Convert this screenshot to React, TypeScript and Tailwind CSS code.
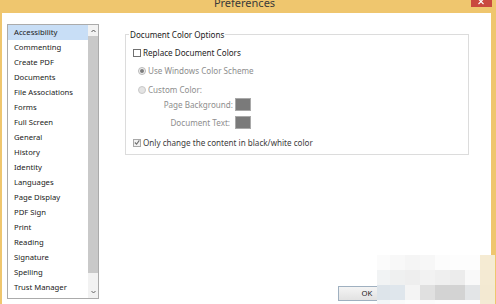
import React from "react";

const items = [
  "Accessibility",
  "Commenting",
  "Create PDF",
  "Documents",
  "File Associations",
  "Forms",
  "Full Screen",
  "General",
  "History",
  "Identity",
  "Languages",
  "Page Display",
  "PDF Sign",
  "Print",
  "Reading",
  "Signature",
  "Spelling",
  "Trust Manager",
];

const mosaic: string[][] = [
  ["#fbfbfb", "#f8f8f8", "#f5f5f5", "#f7f7f7", "#fcfcfc", "#fdfdfd", "#fdfdfd", "#f5ebd3"],
  ["#f1f3f4", "#eff0f0", "#eeeeee", "#f2f2f2", "#efefef", "#ececec", "#f9f9f9", "#f4ead3"],
  ["#dde4ea", "#dfe6ec", "#f4f4f4", "#e0e0e0", "#d3d3d3", "#d3d3d3", "#e3e5e7", "#f3e9d2"],
  ["#f3f6f8", "#fafafa", "#fdfdfd", "#fbfbfb", "#fdfdfd", "#fdfdfd", "#fdfdfd", "#f4ebd5"],
];

function Checkbox({ checked }: { checked?: boolean }) {
  if (checked) {
    return (
      <div className="w-[8px] h-[8px] border border-[#a8a8a8] bg-[#f2f2f2] flex items-center justify-center shrink-0">
        <svg width="7" height="7" viewBox="0 0 7 7">
          <path d="M1 3.5 L3 5.5 L6.2 1" fill="none" stroke="#707070" strokeWidth="1.3" />
        </svg>
      </div>
    );
  }
  return <div className="w-[8px] h-[8px] border border-[#707070] bg-white shrink-0" />;
}

function Radio({ checked }: { checked?: boolean }) {
  return (
    <div
      className={
        checked
          ? "w-[8px] h-[8px] rounded-full border border-[#b8b8b8] bg-[#f2f2f2] flex items-center justify-center shrink-0"
          : "w-[8px] h-[8px] rounded-full border border-[#c8c8c8] bg-[#e4e4e4] shrink-0"
      }
    >
      {checked && <div className="w-[4px] h-[4px] rounded-full bg-[#7c7c7c]" />}
    </div>
  );
}

export default function App() {
  return (
    <div className="w-[496px] h-[304px] bg-[#efc66e] flex flex-col overflow-hidden relative font-['Noto_Sans',sans-serif] text-[7.7px] leading-[11px] text-[#222]">
      {/* title bar */}
      <div className="h-[13px] shrink-0 relative flex justify-center">
        <div className="text-[11px] leading-[11px] text-[#3a3a3a] -mt-[3px] -ml-[7px]">Preferences</div>
        <div className="absolute right-[4px] top-0 w-[21px] h-[7px] bg-[#c9493f] flex justify-center">
          <svg width="7" height="5" viewBox="0 0 7 5">
            <path d="M0.5 -1 L5.5 4 M5.5 -1 L0.5 4" stroke="#ffffff" strokeWidth="1.1" />
          </svg>
        </div>
      </div>

      {/* body */}
      <div className="flex-1 ml-[2px] mr-[5px] bg-white flex pt-[11px] pl-[5px]">
        {/* list box */}
        <div className="w-[92px] h-[275px] border border-[#ababab] flex shrink-0">
          <div className="w-[80px] flex flex-col">
            {items.map((it, i) => (
              <div
                key={it}
                className={
                  i === 0
                    ? "h-[15px] pl-[6px] flex items-center bg-[#c8def6] text-[#1a1a1a]"
                    : "h-[15px] pl-[6px] flex items-center text-[#1a1a1a]"
                }
              >
                {it}
              </div>
            ))}
          </div>
          <div className="w-[10px] flex flex-col bg-[#f2f2f2]">
            <div className="h-[11px] flex items-center justify-center">
              <svg width="5" height="4" viewBox="0 0 5 4">
                <path d="M0.5 3 L2.5 1 L4.5 3" fill="none" stroke="#555" strokeWidth="1" />
              </svg>
            </div>
            <div className="h-[237px] bg-[#c9c9c9]" />
            <div className="flex-1" />
            <div className="h-[12px] flex items-center justify-center">
              <svg width="5" height="4" viewBox="0 0 5 4">
                <path d="M0.5 1 L2.5 3 L4.5 1" fill="none" stroke="#666" strokeWidth="1" />
              </svg>
            </div>
          </div>
        </div>

        {/* right column */}
        <div className="ml-[26px] w-[344px] flex flex-col text-[8.1px]">
          <div className="mt-[10px] h-[121px] border border-[#dcdcdc] relative flex flex-col pt-[11px]">
            <div className="absolute left-[3px] -top-[6px] px-[1px] bg-white text-[#222]">
              Document Color Options
            </div>
            <div className="h-[13px] flex items-center pl-[7px] gap-[2px]">
              <Checkbox />
              <span className="text-[#1e1e1e]">Replace Document Colors</span>
            </div>
            <div className="h-[13px] mt-[5px] flex items-center pl-[12px] gap-[2px] text-[#8e8e8e]">
              <Radio checked />
              <span>Use Windows Color Scheme</span>
            </div>
            <div className="h-[13px] mt-[6px] flex items-center pl-[12px] gap-[2px] text-[#8e8e8e]">
              <Radio />
              <span>Custom Color:</span>
            </div>
            <div className="h-[13px] mt-[2px] flex items-center text-[#8e8e8e]">
              <div className="w-[107px] text-right">Page Background:</div>
              <div className="ml-[2px] w-[16px] h-[13px] bg-[#7a7a7a] border border-[#a9a9a9]" />
            </div>
            <div className="h-[13px] mt-[5px] flex items-center text-[#8e8e8e]">
              <div className="w-[104px] text-right">Document Text:</div>
              <div className="ml-[5px] w-[16px] h-[13px] bg-[#7a7a7a] border border-[#a9a9a9]" />
            </div>
            <div className="h-[13px] mt-[7px] flex items-center pl-[7px] gap-[2px]">
              <Checkbox checked />
              <span className="text-[#3c3c3c]">Only change the content in black/white color</span>
            </div>
          </div>

          <div className="flex-1" />

          <div className="flex justify-end gap-[7px] mr-[8px] mb-[3px] text-[7.7px]">
            <div className="w-[58px] h-[15px] border border-[#9fb0c0] bg-gradient-to-b from-[#f4f4f4] to-[#e2e2e2] flex items-center justify-center text-[#222]">
              OK
            </div>
            <div className="w-[58px] h-[15px] border border-[#acacac] bg-gradient-to-b from-[#f4f4f4] to-[#e2e2e2] flex items-center justify-center text-[#222]">
              Cancel
            </div>
          </div>
        </div>
      </div>

      {/* pixelated watermark overlay */}
      <div className="absolute left-[377px] top-[255px] flex flex-col">
        {mosaic.map((row, r) => (
          <div key={r} className="flex">
            {row.map((c, k) => (
              <div
                key={k}
                className={(k === 0 ? "w-[13px]" : "w-[15px]") + " " + (r === 3 ? "h-[4px]" : "h-[15px]")}
                style={{ backgroundColor: c }}
              />
            ))}
          </div>
        ))}
      </div>
    </div>
  );
}
